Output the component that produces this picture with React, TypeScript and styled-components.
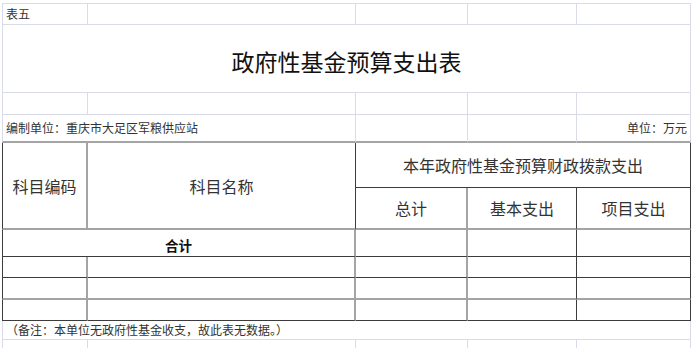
import React from 'react';
import styled, { createGlobalStyle } from 'styled-components';

const GlobalStyle = createGlobalStyle`
  html, body { margin: 0; padding: 0; background: #ffffff; }
  body { font-family: "Noto Sans CJK SC", "Noto Sans", sans-serif; color: #222; }
  * { box-sizing: border-box; }
`;

const LG = '1px solid #d9dbe8';
const DK = '1px solid #3c3c3c';
const GR = '2px solid #a4a4a4';

const Sheet = styled.div`
  display: grid;
  grid-template-columns: 86px 268px 112px 109px 114px;
  grid-template-rows: 22px 68px 22px 28px 45px 42px 27px 21px 22px 21px 19px 20px;
  margin: 3px 0 0 2px;
  width: max-content;
`;

type CellProps = {
  $col: string;
  $row: string;
  $t?: string;
  $r?: string;
  $b?: string;
  $l?: string;
};

const Cell = styled.div<CellProps>`
  grid-column: ${p => p.$col};
  grid-row: ${p => p.$row};
  border-top: ${p => p.$t ?? 'none'};
  border-right: ${p => p.$r ?? 'none'};
  border-bottom: ${p => p.$b ?? 'none'};
  border-left: ${p => p.$l ?? 'none'};
  display: flex;
  align-items: center;
  justify-content: center;
  white-space: nowrap;
  overflow: hidden;
`;

const SmallText = styled(Cell)<{ $right?: boolean }>`
  justify-content: ${p => (p.$right ? 'flex-end' : 'flex-start')};
  padding: 0 ${p => (p.$right ? '3px' : '0')} 0 ${p => (p.$right ? '0' : '3px')};
  font-size: 12px;
  line-height: 14px;
  color: #333;
`;

const TitleCell = styled(Cell)`
  font-size: 23px;
  line-height: 26px;
  color: #111;
  padding-top: 4px;
`;

const HeadCell = styled(Cell)`
  font-size: 16px;
  line-height: 18px;
  color: #333;
`;

const TotalCell = styled(Cell)`
  font-size: 13.5px;
  line-height: 15px;
  font-weight: 700;
  color: #111;
  padding-top: 4px;
`;

const App: React.FC = () => {
  const bodyRows = [
    { row: '8', b: DK },
    { row: '9', b: GR },
    { row: '10', b: DK },
  ];
  const cols = ['1', '2', '3', '4', '5'];
  return (
    <>
      <GlobalStyle />
      <Sheet>
        {/* row 1 */}
        <SmallText $col="1" $row="1" $t={LG} $l={LG} $r={LG} $b={LG}>表五</SmallText>
        {['2', '3', '4', '5'].map(c => (
          <Cell key={'r1' + c} $col={c} $row="1" $t={LG} $r={LG} $b={LG} />
        ))}

        {/* title */}
        <TitleCell $col="1 / 6" $row="2" $l={LG} $r={LG} $b={LG}>政府性基金预算支出表</TitleCell>

        {/* spacer row */}
        {cols.map(c => (
          <Cell key={'r3' + c} $col={c} $row="3" $l={c === '1' ? LG : undefined} $r={LG} $b={LG} />
        ))}

        {/* info row */}
        <SmallText $col="1 / 3" $row="4" $l={LG} $r={LG} $b={GR}>编制单位：重庆市大足区军粮供应站</SmallText>
        <Cell $col="3" $row="4" $r={LG} $b={GR} />
        <Cell $col="4" $row="4" $r={LG} $b={GR} />
        <SmallText $right $col="5" $row="4" $r={LG} $b={GR}>单位：万元</SmallText>

        {/* header */}
        <HeadCell $col="1" $row="5 / 7" $l={DK} $r={GR} $b={GR}>科目编码</HeadCell>
        <HeadCell $col="2" $row="5 / 7" $r={DK} $b={GR}>科目名称</HeadCell>
        <HeadCell $col="3 / 6" $row="5" $r={DK} $b={DK}>本年政府性基金预算财政拨款支出</HeadCell>
        <HeadCell $col="3" $row="6" $r={GR} $b={GR}>总计</HeadCell>
        <HeadCell $col="4" $row="6" $r={DK} $b={GR}>基本支出</HeadCell>
        <HeadCell $col="5" $row="6" $r={DK} $b={GR}>项目支出</HeadCell>

        {/* total */}
        <TotalCell $col="1 / 3" $row="7" $l={DK} $r={GR} $b={DK}>合计</TotalCell>
        <Cell $col="3" $row="7" $r={GR} $b={DK} />
        <Cell $col="4" $row="7" $r={DK} $b={DK} />
        <Cell $col="5" $row="7" $r={DK} $b={DK} />

        {/* empty body rows */}
        {bodyRows.map(r => (
          <React.Fragment key={r.row}>
            <Cell $col="1" $row={r.row} $l={DK} $r={GR} $b={r.b} />
            <Cell $col="2" $row={r.row} $r={GR} $b={r.b} />
            <Cell $col="3" $row={r.row} $r={GR} $b={r.b} />
            <Cell $col="4" $row={r.row} $r={DK} $b={r.b} />
            <Cell $col="5" $row={r.row} $r={DK} $b={r.b} />
          </React.Fragment>
        ))}

        {/* note */}
        <SmallText $col="1 / 6" $row="11" $l={LG} $r={LG} $b={LG}>
          （备注：本单位无政府性基金收支，故此表无数据。）
        </SmallText>

        {/* trailing grid row */}
        {cols.map(c => (
          <Cell key={'r12' + c} $col={c} $row="12" $l={c === '1' ? LG : undefined} $r={LG} $b={LG} />
        ))}
      </Sheet>
    </>
  );
};

export default App;
